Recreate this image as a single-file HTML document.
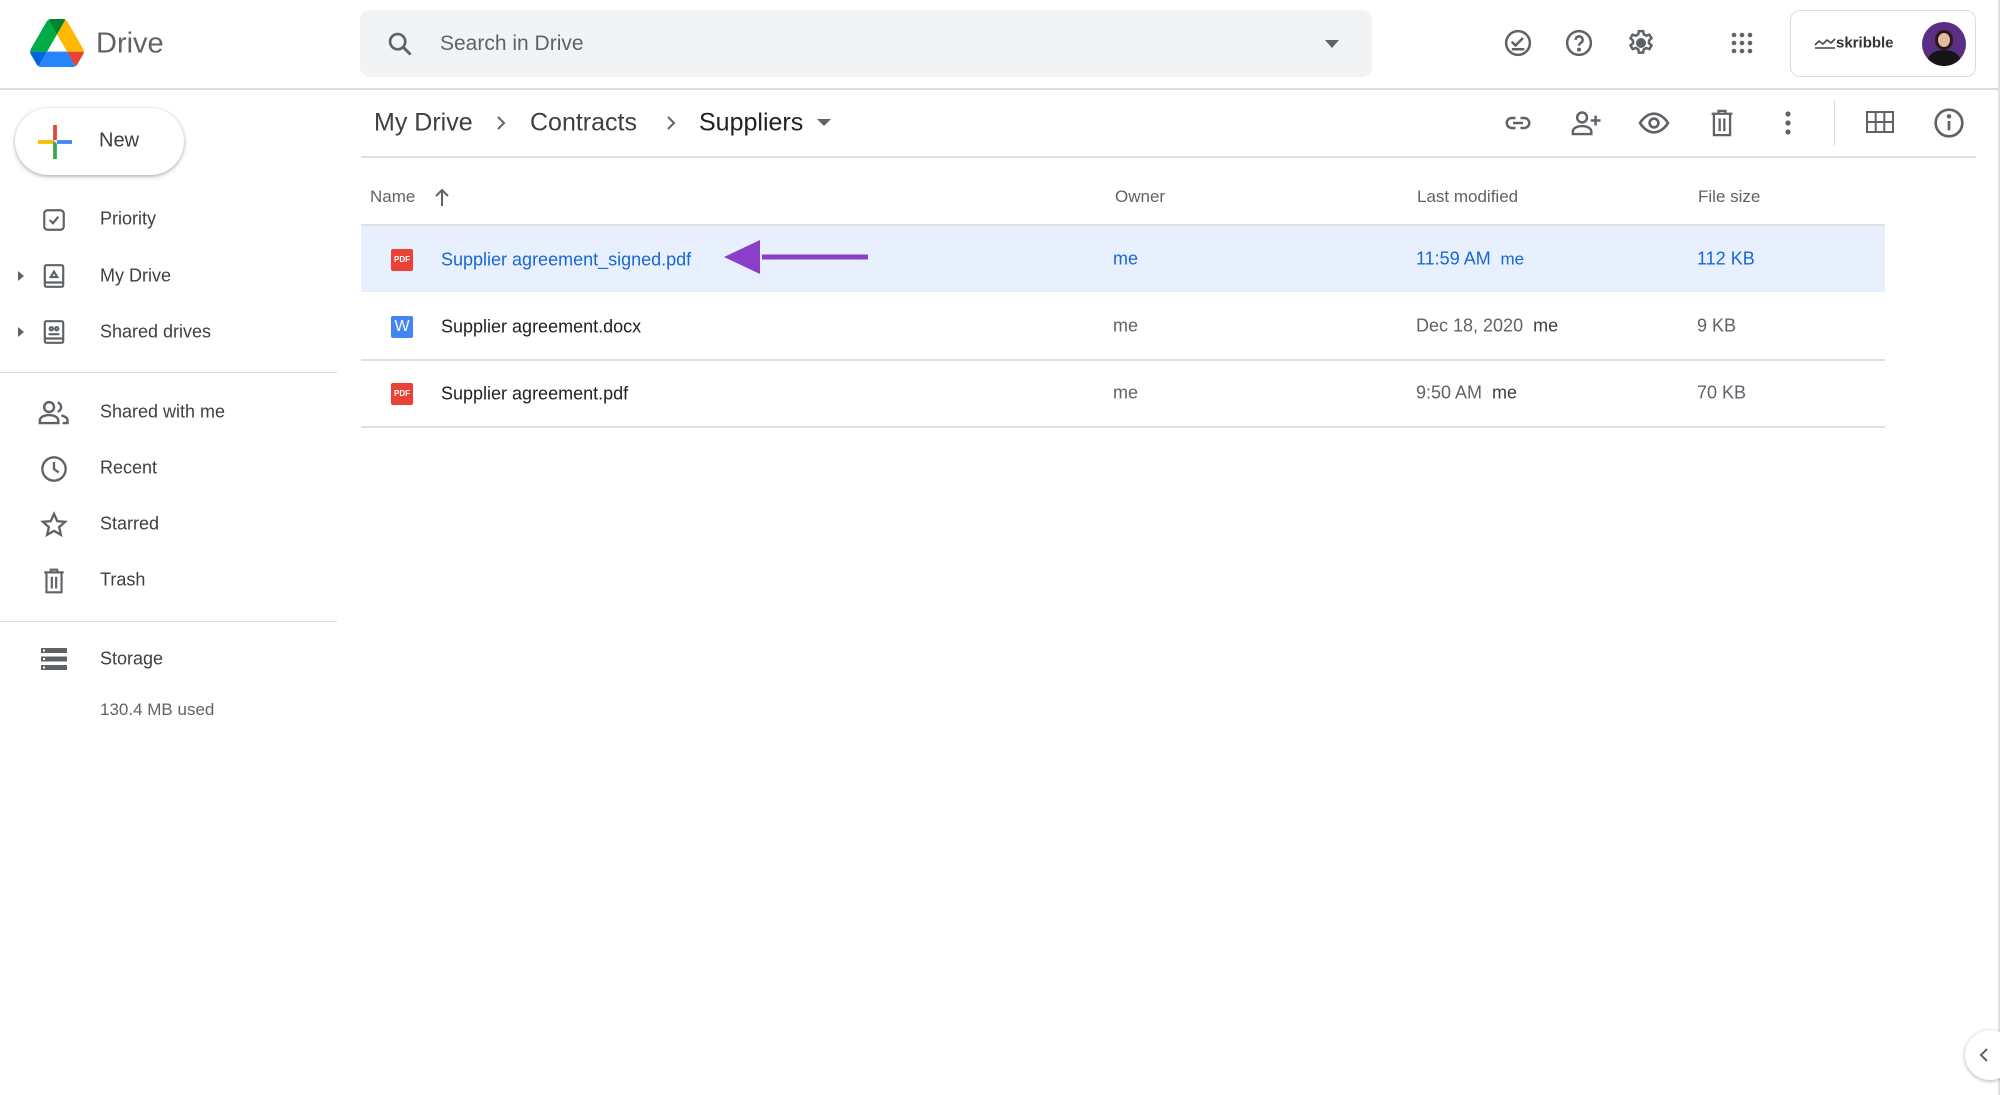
<!DOCTYPE html>
<html><head><style>
*{margin:0;padding:0;box-sizing:border-box}
body{width:2000px;height:1095px;position:relative;background:#fff;font-family:"Liberation Sans",Arial,sans-serif;color:#3c4043;overflow:hidden}
.a{position:absolute}
.t{position:absolute;white-space:nowrap;transform:translateY(-50%)}
svg.i{position:absolute;fill:none;stroke:#5f6368;stroke-width:2}
</style></head><body>
<svg class="a" style="left:30px;top:19px" width="54" height="48" viewBox="0 0 87.3 78">
<path d="M6.6 66.85l3.85 6.65c.8 1.4 1.95 2.5 3.3 3.3l13.75-23.8H0c0 1.55.4 3.1 1.2 4.5z" fill="#0066da"/>
<path d="M43.65 25L29.9 1.2c-1.35.8-2.5 1.9-3.3 3.3L1.2 48.5A9.06 9.06 0 000 53h27.5z" fill="#00ac47"/>
<path d="M73.55 76.8c1.35-.8 2.5-1.9 3.3-3.3l1.6-2.75 7.65-13.25c.8-1.4 1.2-2.95 1.2-4.5H59.8l5.85 11.5z" fill="#ea4335"/>
<path d="M43.65 25L57.4 1.2C56.05.4 54.5 0 52.9 0H34.4c-1.6 0-3.15.45-4.5 1.2z" fill="#00832d"/>
<path d="M59.8 53H27.5L13.75 76.8c1.35.8 2.9 1.2 4.5 1.2h50.8c1.6 0 3.15-.45 4.5-1.2z" fill="#2684fc"/>
<path d="M73.4 26.5L60.7 4.5c-.8-1.4-1.95-2.5-3.3-3.3L43.65 25 59.8 53h27.45c0-1.55-.4-3.1-1.2-4.5z" fill="#ffba00"/>
</svg>
<div class="t" style="left:96px;top:44px;font-size:29px;color:#5f6368">Drive</div>
<div class="a" style="left:360px;top:10px;width:1012px;height:67px;background:#f1f3f4;border-radius:10px"></div>
<svg class="i" style="left:386px;top:30px" width="28" height="28" viewBox="0 0 24 24"><circle cx="10" cy="10" r="6.5" stroke-width="2.3"/><path d="M15 15l6 6" stroke-width="2.5"/></svg>
<div class="t" style="left:440px;top:44px;font-size:21px;color:#5f6368">Search in Drive</div>
<svg class="a" style="left:1324px;top:39px" width="16" height="10"><path d="M1 1h14L8 9z" fill="#5f6368"/></svg>
<div class="a" style="left:0;top:88px;width:2000px;height:2px;background:#dadce0"></div>
<!-- top icons -->
<svg class="i" style="left:1503px;top:28px" width="30" height="30" viewBox="0 0 24 24"><circle cx="12" cy="12" r="9.5"/><path d="M7 11l3 3 6-6M7 17h10"/></svg>
<svg class="i" style="left:1564px;top:28px" width="30" height="30" viewBox="0 0 24 24"><circle cx="12" cy="12" r="9.5"/><path d="M9.3 9.5a2.8 2.8 0 115 1.7c-1 .9-2.3 1.4-2.3 3"/><circle cx="12" cy="17.3" r=".6" fill="#5f6368"/></svg>
<svg class="i" style="left:1626px;top:28px" width="30" height="30" viewBox="0 0 24 24"><path d="M10.3 2.5h3.4l.5 2.6 2 1.1 2.5-.9 1.7 2.9-2 1.8v2.2l2 1.7-1.7 3-2.5-.9-2 1.1-.5 2.6h-3.4l-.5-2.6-2-1.1-2.5.9-1.7-3 2-1.7V10L3.6 8.2l1.7-2.9 2.5.9 2-1.1z"/><circle cx="12" cy="12" r="3" fill="#5f6368"/></svg>
<svg class="a" style="left:1730px;top:31px" width="24" height="24" viewBox="0 0 24 24" fill="#5f6368"><circle cx="4" cy="4" r="2.3"/><circle cx="12" cy="4" r="2.3"/><circle cx="20" cy="4" r="2.3"/><circle cx="4" cy="12" r="2.3"/><circle cx="12" cy="12" r="2.3"/><circle cx="20" cy="12" r="2.3"/><circle cx="4" cy="20" r="2.3"/><circle cx="12" cy="20" r="2.3"/><circle cx="20" cy="20" r="2.3"/></svg>
<div class="a" style="left:1790px;top:10px;width:186px;height:67px;border:1px solid #dadce0;border-radius:10px"></div>
<svg class="a" style="left:1814px;top:37px" width="22" height="12"><path d="M1 8l4-4 4 3 4-4 4 3 4-4M1 11h20" stroke="#444" stroke-width="1.6" fill="none"/></svg>
<div class="t" style="left:1836px;top:43px;font-size:15px;font-weight:bold;color:#333">skribble</div>
<div class="a" style="left:1922px;top:22px;width:44px;height:44px;border-radius:50%;background:#5b2e84;overflow:hidden"><div class="a" style="left:13px;top:8px;width:18px;height:20px;border-radius:50%;background:#e3b8a0;border:3px solid #2a1a14"></div><div class="a" style="left:6px;top:28px;width:32px;height:20px;border-radius:50% 50% 0 0;background:#151515"></div></div>
<!-- New -->
<div class="a" style="left:15px;top:108px;width:169px;height:67px;border-radius:34px;background:#fff;box-shadow:0 1px 3px rgba(60,64,67,.35),0 2px 6px rgba(60,64,67,.15)"></div>
<svg class="a" style="left:38px;top:125px" width="34" height="34" viewBox="0 0 36 36"><path fill="#34a853" d="M16 16v20h4V20z"/><path fill="#4285f4" d="M20 16v4h16v-4z"/><path fill="#ea4335" d="M16 0v16h4V0z"/><path fill="#fbbc04" d="M0 16v4h16v-4z"/></svg>
<div class="t" style="left:99px;top:141px;font-size:20px;color:#3c4043">New</div>
<!-- sidebar -->
<div class="t" style="left:100px;top:219px;font-size:18px">Priority</div>
<div class="t" style="left:100px;top:276px;font-size:18px">My Drive</div>
<div class="t" style="left:100px;top:332px;font-size:18px">Shared drives</div>
<div class="t" style="left:100px;top:412px;font-size:18px">Shared with me</div>
<div class="t" style="left:100px;top:468px;font-size:18px">Recent</div>
<div class="t" style="left:100px;top:524px;font-size:18px">Starred</div>
<div class="t" style="left:100px;top:580px;font-size:18px">Trash</div>
<div class="t" style="left:100px;top:659px;font-size:18px">Storage</div>
<div class="t" style="left:100px;top:710px;font-size:17px;color:#5f6368">130.4 MB used</div>
<svg class="i" style="left:41px;top:207px" width="26" height="26" viewBox="0 0 24 24"><rect x="3" y="3" width="18" height="18" rx="3"/><path d="M8 12l3 3 5-6"/></svg>
<svg class="a" style="left:17px;top:270px" width="8" height="12"><path d="M1 1l6 5-6 5z" fill="#5f6368"/></svg>
<svg class="i" style="left:41px;top:263px" width="26" height="26" viewBox="0 0 24 24"><rect x="3.5" y="2" width="17" height="20" rx="1.5"/><path d="M3.5 18h17M9 13l3-5 3 5z"/></svg>
<svg class="a" style="left:17px;top:326px" width="8" height="12"><path d="M1 1l6 5-6 5z" fill="#5f6368"/></svg>
<svg class="i" style="left:41px;top:319px" width="26" height="26" viewBox="0 0 24 24"><rect x="3.5" y="2" width="17" height="20" rx="1.5"/><path d="M3.5 18h17M7 14h10"/><circle cx="9.5" cy="9" r="1.5"/><circle cx="14.5" cy="9" r="1.5"/></svg>
<div class="a" style="left:0;top:372px;width:337px;height:1px;background:#dadce0"></div>
<svg class="i" style="left:38px;top:398px" width="32" height="28" viewBox="0 0 26 22"><circle cx="9" cy="7" r="4"/><path d="M1.5 20v-2c0-3 4-4.5 7.5-4.5s7.5 1.5 7.5 4.5v2zM16 3.2a4 4 0 010 7.6M19 13.8c2.5.6 5 2 5 4.2v2h-4"/></svg>
<svg class="i" style="left:40px;top:455px" width="28" height="28" viewBox="0 0 24 24"><circle cx="12" cy="12" r="10"/><path d="M12 6v6l4 3"/></svg>
<svg class="i" style="left:40px;top:511px" width="28" height="28" viewBox="0 0 24 24"><path d="M12 2.5l2.8 6.2 6.7.6-5.1 4.5 1.5 6.6L12 17l-5.9 3.4 1.5-6.6-5.1-4.5 6.7-.6z"/></svg>
<svg class="i" style="left:41px;top:567px" width="26" height="28" viewBox="0 0 24 26"><path d="M3 5h18M9 5V2.5h6V5M5 5v18.5h14V5M10 9v11M14 9v11"/></svg>
<div class="a" style="left:0;top:621px;width:337px;height:1px;background:#dadce0"></div>
<svg class="a" style="left:41px;top:648px" width="26" height="22" viewBox="0 0 26 22" fill="#5f6368"><rect y="0" width="26" height="5"/><rect y="8.5" width="26" height="5"/><rect y="17" width="26" height="5"/><rect x="2" y="1.5" width="2" height="2" fill="#fff"/><rect x="2" y="10" width="2" height="2" fill="#fff"/><rect x="2" y="18.5" width="2" height="2" fill="#fff"/></svg>
<!-- breadcrumb -->
<div class="t" style="left:374px;top:123px;font-size:25px;color:#3c4043">My Drive</div>
<svg class="i" style="left:495px;top:114px" width="12" height="18"><path d="M3 3l6 6-6 6"/></svg>
<div class="t" style="left:530px;top:123px;font-size:25px;color:#3c4043">Contracts</div>
<svg class="i" style="left:665px;top:114px" width="12" height="18"><path d="M3 3l6 6-6 6"/></svg>
<div class="t" style="left:699px;top:123px;font-size:25px;color:#202124">Suppliers</div>
<svg class="a" style="left:817px;top:119px" width="14" height="8"><path d="M0 0h14L7 7z" fill="#5f6368"/></svg>
<!-- toolbar icons -->
<svg class="i" style="left:1503px;top:108px" width="30" height="30" viewBox="0 0 24 24"><path d="M10 8H7a4 4 0 000 8h3M14 8h3a4 4 0 010 8h-3M8 12h8"/></svg>
<svg class="i" style="left:1571px;top:108px" width="32" height="30" viewBox="0 0 26 24"><circle cx="9" cy="7.5" r="4"/><path d="M1.5 21v-2c0-3 4-4.5 7.5-4.5s7.5 1.5 7.5 4.5v2zM20 6v8M16 10h8"/></svg>
<svg class="i" style="left:1638px;top:107px" width="32" height="32" viewBox="0 0 24 24"><path d="M1.5 12S5.5 5 12 5s10.5 7 10.5 7-4 7-10.5 7S1.5 12 1.5 12z"/><circle cx="12" cy="12" r="3.3"/></svg>
<svg class="i" style="left:1708px;top:108px" width="28" height="30" viewBox="0 0 24 26"><path d="M3 5h18M9 5V2.5h6V5M5 5v18.5h14V5M10 9v11M14 9v11"/></svg>
<svg class="a" style="left:1784px;top:110px" width="8" height="26" fill="#5f6368"><circle cx="4" cy="4" r="2.6"/><circle cx="4" cy="13" r="2.6"/><circle cx="4" cy="22" r="2.6"/></svg>
<div class="a" style="left:1834px;top:100px;width:1px;height:46px;background:#dadce0"></div>
<svg class="i" style="left:1866px;top:110px" width="28" height="24" viewBox="0 0 28 24"><rect x="1" y="2" width="26" height="20"/><path d="M1 12h26M9.7 2v20M18.3 2v20"/></svg>
<svg class="i" style="left:1933px;top:107px" width="32" height="32" viewBox="0 0 24 24"><circle cx="12" cy="12" r="10"/><path d="M12 10.5v7"/><circle cx="12" cy="7" r=".7" fill="#5f6368"/></svg>
<div class="a" style="left:361px;top:156px;width:1615px;height:2px;background:#e0e0e0"></div>
<div class="a" style="left:1998px;top:0;width:2px;height:1095px;background:#e0e0e0"></div>
<!-- table -->
<div class="t" style="left:370px;top:197px;font-size:17px;color:#5f6368">Name</div>
<svg class="i" style="left:433px;top:187px" width="18" height="20"><path d="M9 19V3M3 9l6-6 6 6"/></svg>
<div class="t" style="left:1115px;top:197px;font-size:17px;color:#5f6368">Owner</div>
<div class="t" style="left:1417px;top:197px;font-size:17px;color:#5f6368">Last modified</div>
<div class="t" style="left:1698px;top:197px;font-size:17px;color:#5f6368">File size</div>
<div class="a" style="left:361px;top:224px;width:1524px;height:2px;background:#e0e0e0"></div>
<div class="a" style="left:361px;top:226px;width:1524px;height:66px;background:#e8f0fe"></div>
<div class="a" style="left:361px;top:359px;width:1524px;height:2px;background:#e0e0e0"></div>
<div class="a" style="left:361px;top:426px;width:1524px;height:2px;background:#e0e0e0"></div>
<div class="a" style="left:391px;top:249px;width:22px;height:22px;background:#ea4335;border-radius:2px;color:#fff;font-size:8px;font-weight:bold;text-align:center;line-height:22px">PDF</div>
<div class="a" style="left:391px;top:316px;width:22px;height:22px;background:#4285f4;border-radius:2px;color:#fff;font-size:16px;text-align:center;line-height:22px">W</div>
<div class="a" style="left:391px;top:383px;width:22px;height:22px;background:#ea4335;border-radius:2px;color:#fff;font-size:8px;font-weight:bold;text-align:center;line-height:22px">PDF</div>
<div class="t" style="left:441px;top:260px;font-size:18px;color:#1967d2">Supplier agreement_signed.pdf</div>
<div class="t" style="left:441px;top:327px;font-size:18px;color:#202124">Supplier agreement.docx</div>
<div class="t" style="left:441px;top:394px;font-size:18px;color:#202124">Supplier agreement.pdf</div>
<svg class="a" style="left:722px;top:238px" width="146" height="38"><path d="M40 19h124" stroke="#8b3fc8" stroke-width="5"/><path d="M2 19L38 2v34z" fill="#8b3fc8"/></svg>
<div class="t" style="left:1113px;top:259px;font-size:18px;color:#1967d2">me</div>
<div class="t" style="left:1113px;top:326px;font-size:18px;color:#5f6368">me</div>
<div class="t" style="left:1113px;top:393px;font-size:18px;color:#5f6368">me</div>
<div class="t" style="left:1416px;top:259px;font-size:18px;color:#1967d2">11:59 AM <span style="font-size:17px">&nbsp;me</span></div>
<div class="t" style="left:1416px;top:326px;font-size:18px;color:#5f6368">Dec 18, 2020 <span style="color:#3c4043">&nbsp;me</span></div>
<div class="t" style="left:1416px;top:393px;font-size:18px;color:#5f6368">9:50 AM <span style="color:#3c4043">&nbsp;me</span></div>
<div class="t" style="left:1697px;top:259px;font-size:18px;color:#1967d2">112 KB</div>
<div class="t" style="left:1697px;top:326px;font-size:18px;color:#5f6368">9 KB</div>
<div class="t" style="left:1697px;top:393px;font-size:18px;color:#5f6368">70 KB</div>
<div class="a" style="left:1965px;top:1030px;width:50px;height:50px;border-radius:50%;background:#fff;box-shadow:0 1px 4px rgba(0,0,0,.3)"></div>
<svg class="i" style="left:1978px;top:1047px" width="12" height="16"><path d="M9 2L3 8l6 6"/></svg>
</body></html>
